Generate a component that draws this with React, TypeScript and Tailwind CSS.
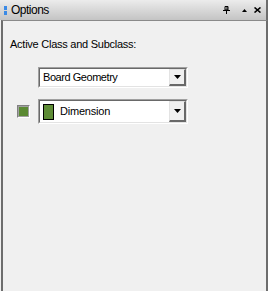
import React from "react";

function Arrow() {
  return (
    <svg width="7" height="4" viewBox="0 0 7 4" className="block">
      <path d="M0 0H7L3.5 4Z" fill="#000" />
    </svg>
  );
}

function DropButton() {
  return (
    <div className="h-full w-[17px] border-t border-l border-t-[#e3e3e3] border-l-[#e3e3e3] border-b-2 border-r-2 border-b-[#696969] border-r-[#696969] bg-[#f0f0f0] flex items-center justify-center">
      <Arrow />
    </div>
  );
}

function Combo({ h, children }: { h: string; children: React.ReactNode }) {
  return (
    <div className={`w-[150px] ${h} border-t border-l border-t-[#a0a0a0] border-l-[#a0a0a0] border-b border-r border-b-white border-r-white`}>
      <div className="h-full border-t border-l border-t-[#696969] border-l-[#696969] border-b border-r border-b-[#e3e3e3] border-r-[#e3e3e3] bg-white flex items-stretch">
        <div className="flex-1 flex items-center pl-[3px]">{children}</div>
        <DropButton />
      </div>
    </div>
  );
}

export default function App() {
  return (
    <div
      className="w-[268px] h-[291px] bg-[#f0f0f0] flex flex-col text-black"
      style={{ fontFamily: '"Liberation Sans", Arial, sans-serif' }}
    >
      <div className="h-[20px] flex items-center bg-gradient-to-b from-[#ececec] to-[#c4c4c4] border-r-2 border-[#6d6d6d] relative">
        <div className="ml-[4px] flex flex-col gap-[1px]">
          <div className="w-[3px] h-[4px] bg-[#3a8ae6]" />
          <div className="w-[3px] h-[4px] bg-[#3a8ae6]" />
        </div>
        <span className="ml-[4px] text-[12px] leading-none tracking-[-0.5px]">Options</span>
        <div className="ml-auto flex items-center mr-[5px]">
          <svg width="7" height="8" viewBox="0 0 7 8" className="block">
            <path d="M2 0.5H5V4H2Z" fill="none" stroke="#000" strokeWidth="1" />
            <path d="M4 0.5V4" stroke="#000" strokeWidth="1" />
            <path d="M0 4.5H7" stroke="#000" strokeWidth="1" />
            <path d="M3.5 4.5V8" stroke="#000" strokeWidth="1" />
          </svg>
          <svg width="5" height="3" viewBox="0 0 5 3" className="block ml-[12px]">
            <path d="M0 3H5L2.5 0Z" fill="#000" />
          </svg>
          <svg width="7" height="6" viewBox="0 0 7 6" className="block ml-[7px]">
            <path d="M0.5 0.5L6.5 5.5M6.5 0.5L0.5 5.5" stroke="#000" strokeWidth="1.6" />
          </svg>
        </div>
      </div>
      <div className="flex-1 ml-[1px] border-l-2 border-t border-r-2 border-[#6d6d6d] border-t-[#8a8a8a] pt-[17px] pl-[7px]">
        <div className="text-[11px] leading-[13px] tracking-[-0.25px]">Active Class and Subclass:</div>
        <div className="mt-[16px] ml-[28px]">
          <Combo h="h-[21px]">
            <span className="text-[11px] leading-none tracking-[-0.45px]">Board Geometry</span>
          </Combo>
        </div>
        <div className="mt-[11px] flex items-center">
          <div className="ml-[7px] w-[13px] h-[13px] border border-[#808080] border-b-white border-r-white">
            <div className="w-full h-full border border-[#a0a0a0] bg-[#5b8a33]" />
          </div>
          <div className="ml-[8px]">
            <Combo h="h-[25px]">
              <div className="w-[11px] h-[16px] border border-black bg-[#5e8c36]" />
              <span className="ml-[6px] text-[11px] leading-none tracking-[-0.2px]">Dimension</span>
            </Combo>
          </div>
        </div>
      </div>
    </div>
  );
}
